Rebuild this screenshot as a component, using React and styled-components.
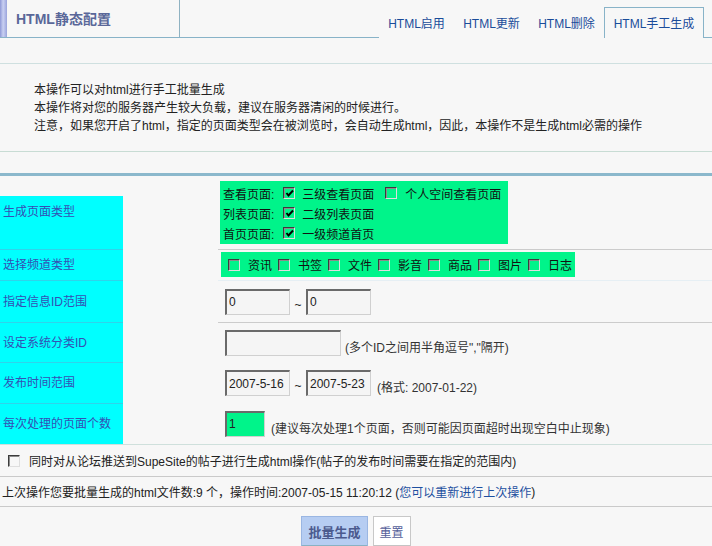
import React from 'react'
import styled, { createGlobalStyle } from 'styled-components'

const GlobalStyle = createGlobalStyle`
body {
    margin: 0;
    background: #f7f7f7;
    font-family: "Liberation Sans", "Noto Sans CJK SC", sans-serif;
    font-size: 12px;
    color: #222;
}
`

const Page = styled.div`
width: 712px;
height: 546px;
overflow: hidden;
`

const Header = styled.div`
display: flex;
height: 37px;
border-bottom: 1px solid #88b3c8;
`

const TitleBox = styled.div`
display: flex;
align-items: center;
width: 179px;
border-right: 1px solid #8fb2c2;
`

const TitleBar = styled.div`
width: 7px;
align-self: stretch;
background: linear-gradient(to right, #8e98d6, #c9d0f2 45%, #9aa4dc);
`

const Title = styled.h1`
margin: 0 0 0 9px;
font-size: 14px;
font-weight: bold;
color: #5a6799;
line-height: 18px;
`

const Tabs = styled.div`
display: flex;
align-items: flex-end;
margin-left: auto;
margin-right: 8px;
`

const Tab = styled.div`
display: flex;
align-items: center;
justify-content: center;
box-sizing: border-box;
width: ${p => (p.$active ? '100px' : '75px')};
height: 31px;
margin-bottom: -1px;
color: #1a4c9a;
line-height: 16px;
cursor: pointer;
border: 1px solid ${p => (p.$active ? '#88b3c8' : 'transparent')};
border-bottom: 0;
background: #f7f7f7;
padding-top: 1px;
`

const Rule = styled.div`
height: ${p => p.$size || 1}px;
background: ${p => p.$color || '#cfe0e0'};
margin-top: ${p => p.$top || 0}px;
`

const Notes = styled.div`
padding: 17px 0 16px 34px;
line-height: 18px;
color: #222;
`

const Row = styled.div`
display: flex;
box-sizing: border-box;
height: ${p => p.$h}px;
border-bottom: ${p => (p.$line ? `1px solid ${p.$line}` : '0')};
`

const LabelCol = styled.div`
width: 218px;
flex: none;
display: flex;
`

const Label = styled.div`
box-sizing: border-box;
width: 123px;
margin-top: ${p => p.$offset || 0}px;
padding: ${p => (p.$offset ? '7px 0 0 3px' : '0 0 0 3px')};
display: flex;
align-items: ${p => (p.$offset ? 'flex-start' : 'center')};
background: #00ffff;
color: #3450b4;
line-height: 18px;
border-bottom: ${p => (p.$last ? '0' : '1px solid #2fd3ea')};
`

const Field = styled.div`
flex: 1;
display: flex;
align-items: ${p => (p.$top ? 'flex-start' : 'center')};
padding: ${p => p.$pad || '0 0 0 7px'};
border-bottom: 1px solid ${p => p.$line || 'transparent'};
`

const GreenBox = styled.div`
background: #00f48a;
color: #111;
padding: ${p => p.$pad};
`

const OptionLine = styled.div`
display: flex;
align-items: center;
height: ${p => p.$h || 20}px;
white-space: nowrap;
`

const Prefix = styled.span`
margin-right: 9px;
`

const Box = styled.span`
display: inline-flex;
align-items: center;
justify-content: center;
box-sizing: border-box;
width: 12px;
height: 12px;
flex: none;
border: 1px solid;
border-color: #3c3c3c #dedede #dedede #3c3c3c;
box-shadow: inset 1px 1px 0 #8c8c8c;
margin-left: ${p => p.$ml || 0}px;
margin-right: ${p => p.$mr || 8}px;
`

const Check = ({ on, ml, mr }) => (
    <Box $ml={ml} $mr={mr}>
        {on && (
            <svg width="9" height="9" viewBox="0 0 9 9">
                <polyline points="1.5,4 3.5,6.5 8,1.5" fill="none" stroke="#000" strokeWidth="2" />
            </svg>
        )}
    </Box>
)

const InputLine = styled.div`
display: flex;
align-items: flex-end;
`

const TextInput = styled.input`
box-sizing: border-box;
width: ${p => p.$w}px;
height: 26px;
padding: 0 2px;
margin: 0;
font: 12px "Liberation Sans", "Noto Sans CJK SC", sans-serif;
color: #222;
background: ${p => p.$bg || '#f5f5f5'};
border-style: solid;
border-width: 2px 1px 1px 2px;
border-color: #6a6a6a #d0d0d0 #d0d0d0 #6a6a6a;
outline: none;
`

const Tilde = styled.span`
width: 16px;
text-align: center;
line-height: 12px;
margin-bottom: 4px;
`

const Hint = styled.span`
margin-left: ${p => p.$ml || 5}px;
line-height: 14px;
margin-bottom: 1px;
color: #333;
white-space: nowrap;
`

const PlainRow = styled.div`
display: flex;
align-items: center;
box-sizing: border-box;
height: ${p => p.$h}px;
padding-left: ${p => p.$pl || 0}px;
border-bottom: 1px solid #cacaca;
white-space: nowrap;
`

const Link = styled.a`
color: #1d4fa0;
text-decoration: none;
`

const Buttons = styled.div`
display: flex;
justify-content: center;
gap: 5px;
padding-top: 9px;
`

const Button = styled.button`
box-sizing: border-box;
height: 32px;
margin: 0;
padding: 0 ${p => (p.$primary ? '6px' : '6px')};
font-family: "Liberation Sans", "Noto Sans CJK SC", sans-serif;
font-size: ${p => (p.$primary ? '13px' : '12px')};
font-weight: ${p => (p.$primary ? 'bold' : 'normal')};
color: ${p => (p.$primary ? '#4b5a8e' : '#55609a')};
background: ${p => (p.$primary ? '#b6cdf2' : '#fff')};
border: 1px solid ${p => (p.$primary ? '#9ab6e2' : '#c8c8c8')};
border-bottom: 3px solid ${p => (p.$primary ? '#88b2c4' : '#c4c4c4')};
cursor: pointer;
`

const tabs = ['HTML启用', 'HTML更新', 'HTML删除', 'HTML手工生成']
const channels = ['资讯', '书签', '文件', '影音', '商品', '图片', '日志']

export default function App() {
    return (
        <Page>
            <GlobalStyle />
            <Header>
                <TitleBox>
                    <TitleBar />
                    <Title>HTML静态配置</Title>
                </TitleBox>
                <Tabs>
                    {tabs.map((t, i) => (
                        <Tab key={t} $active={i === tabs.length - 1}>{t}</Tab>
                    ))}
                </Tabs>
            </Header>

            <Rule $top={25} />
            <Notes>
                <div>本操作可以对html进行手工批量生成</div>
                <div>本操作将对您的服务器产生较大负载，建议在服务器清闲的时候进行。</div>
                <div>注意，如果您开启了html，指定的页面类型会在被浏览时，会自动生成html，因此，本操作不是生成html必需的操作</div>
            </Notes>
            <Rule $color="#c8dcd4" />
            <Rule $size={3} $color="#8bb8cc" $top={21} />

            <Row $h={74}>
                <LabelCol><Label $offset={20}>生成页面类型</Label></LabelCol>
                <Field $top $pad="5px 0 0 2px" $line="#cccccc">
                    <GreenBox $pad="2px 7px 1px 3px">
                        <OptionLine>
                            <Prefix>查看页面:</Prefix>
                            <Check on mr={7} />三级查看页面
                            <Check ml={11} />个人空间查看页面
                        </OptionLine>
                        <OptionLine>
                            <Prefix>列表页面:</Prefix>
                            <Check on mr={7} />二级列表页面
                        </OptionLine>
                        <OptionLine>
                            <Prefix>首页页面:</Prefix>
                            <Check on mr={7} />一级频道首页
                        </OptionLine>
                    </GreenBox>
                </Field>
            </Row>

            <Row $h={31}>
                <LabelCol><Label>选择频道类型</Label></LabelCol>
                <Field $top $pad="2px 0 0 3px" $line="#e6eff4">
                    <GreenBox $pad="0 3px 0 7px">
                        <OptionLine $h={25}>
                            {channels.map((c, i) => (
                                <React.Fragment key={c}>
                                    <Check ml={i ? 6 : 0} />{c}
                                </React.Fragment>
                            ))}
                        </OptionLine>
                    </GreenBox>
                </Field>
            </Row>

            <Row $h={42}>
                <LabelCol><Label>指定信息ID范围</Label></LabelCol>
                <Field $line="#cccccc">
                    <InputLine>
                        <TextInput $w={65} value="0" readOnly />
                        <Tilde>~</Tilde>
                        <TextInput $w={65} value="0" readOnly />
                    </InputLine>
                </Field>
            </Row>

            <Row $h={40}>
                <LabelCol><Label>设定系统分类ID</Label></LabelCol>
                <Field>
                    <InputLine>
                        <TextInput $w={116} value="" readOnly />
                        <Hint $ml={4}>(多个ID之间用半角逗号","隔开)</Hint>
                    </InputLine>
                </Field>
            </Row>

            <Row $h={41}>
                <LabelCol><Label>发布时间范围</Label></LabelCol>
                <Field>
                    <InputLine>
                        <TextInput $w={65} value="2007-5-16" readOnly />
                        <Tilde>~</Tilde>
                        <TextInput $w={65} value="2007-5-23" readOnly />
                        <Hint $ml={6}>(格式: 2007-01-22)</Hint>
                    </InputLine>
                </Field>
            </Row>

            <Row $h={41} $line="#cfe0dc">
                <LabelCol><Label $last>每次处理的页面个数</Label></LabelCol>
                <Field>
                    <InputLine>
                        <TextInput $w={40} $bg="#00f48a" value="1" readOnly />
                        <Hint $ml={6}>(建议每次处理1个页面，否则可能因页面超时出现空白中止现象)</Hint>
                    </InputLine>
                </Field>
            </Row>

            <PlainRow $h={32} $pl={8}>
                <Check ml={0} mr={9} />
                同时对从论坛推送到SupeSite的帖子进行生成html操作(帖子的发布时间需要在指定的范围内)
            </PlainRow>
            <PlainRow $h={30} $pl={2}>
                上次操作您要批量生成的html文件数:9 个，操作时间:2007-05-15 11:20:12 (<Link href="#">您可以重新进行上次操作</Link>)
            </PlainRow>

            <Buttons>
                <Button $primary>批量生成</Button>
                <Button>重置</Button>
            </Buttons>
        </Page>
    )
}
